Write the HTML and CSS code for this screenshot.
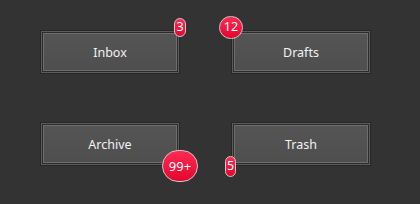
FILE: index.html
```html
<!DOCTYPE html>
<html lang="en">
<head>
    <meta charset="UTF-8">
    <title>Mail Folders</title>
    <link rel="stylesheet" href="styles.css">
</head>
<body>
    <div class="folders">
        <div class="folder">
            <button class="folder-btn">Inbox</button>
            <span class="badge badge-inbox">3</span>
        </div>
        <div class="folder">
            <button class="folder-btn">Drafts</button>
            <span class="badge badge-drafts">12</span>
        </div>
        <div class="folder">
            <button class="folder-btn">Archive</button>
            <span class="badge badge-archive">99+</span>
        </div>
        <div class="folder">
            <button class="folder-btn">Trash</button>
            <span class="badge badge-trash">5</span>
        </div>
    </div>
</body>
</html>
```

FILE: styles.css
```css
html, body { margin: 0; padding: 0; background: #333333; }
body { font-family: "Noto Sans", "Open Sans", sans-serif; width: 420px; height: 204px; overflow: hidden; }
.folders { display: grid; grid-template-columns: 140px 140px; column-gap: 51px; row-gap: 48px; padding: 30px 0 0 40px; }
.folder { position: relative; width: 140px; height: 44px; }
.folder-btn { width: 140px; height: 44px; margin: 0; padding: 0; box-sizing: border-box; border: 1px solid #272727; background: linear-gradient(#555555, #4e4e4e); color: #f2f2f2; font-family: inherit; font-size: 12.5px; cursor: pointer;
    box-shadow: inset 0 0 0 1px #5c5c5c, inset 0 0 0 2px #2c2c2c, inset 0 0 0 3px #6e6e6e; }
.badge { position: absolute; box-sizing: border-box; display: flex; align-items: center; justify-content: center; color: #fff; line-height: 1; border: 1px solid #c9c9c9; border-radius: 999px; background: linear-gradient(#ff2a52, #e4062f); }
.badge-inbox { left: 134px; top: -12px; width: 12px; height: 19px; font-size: 12.5px; }
.badge-drafts { left: -12px; top: -14px; width: 24px; height: 23px; font-size: 12.5px; }
.badge-archive { left: 122px; top: 28px; width: 36px; height: 32px; font-size: 13px; }
.badge-trash { left: -6px; top: 34px; width: 11px; height: 21px; font-size: 12.5px; }
```
